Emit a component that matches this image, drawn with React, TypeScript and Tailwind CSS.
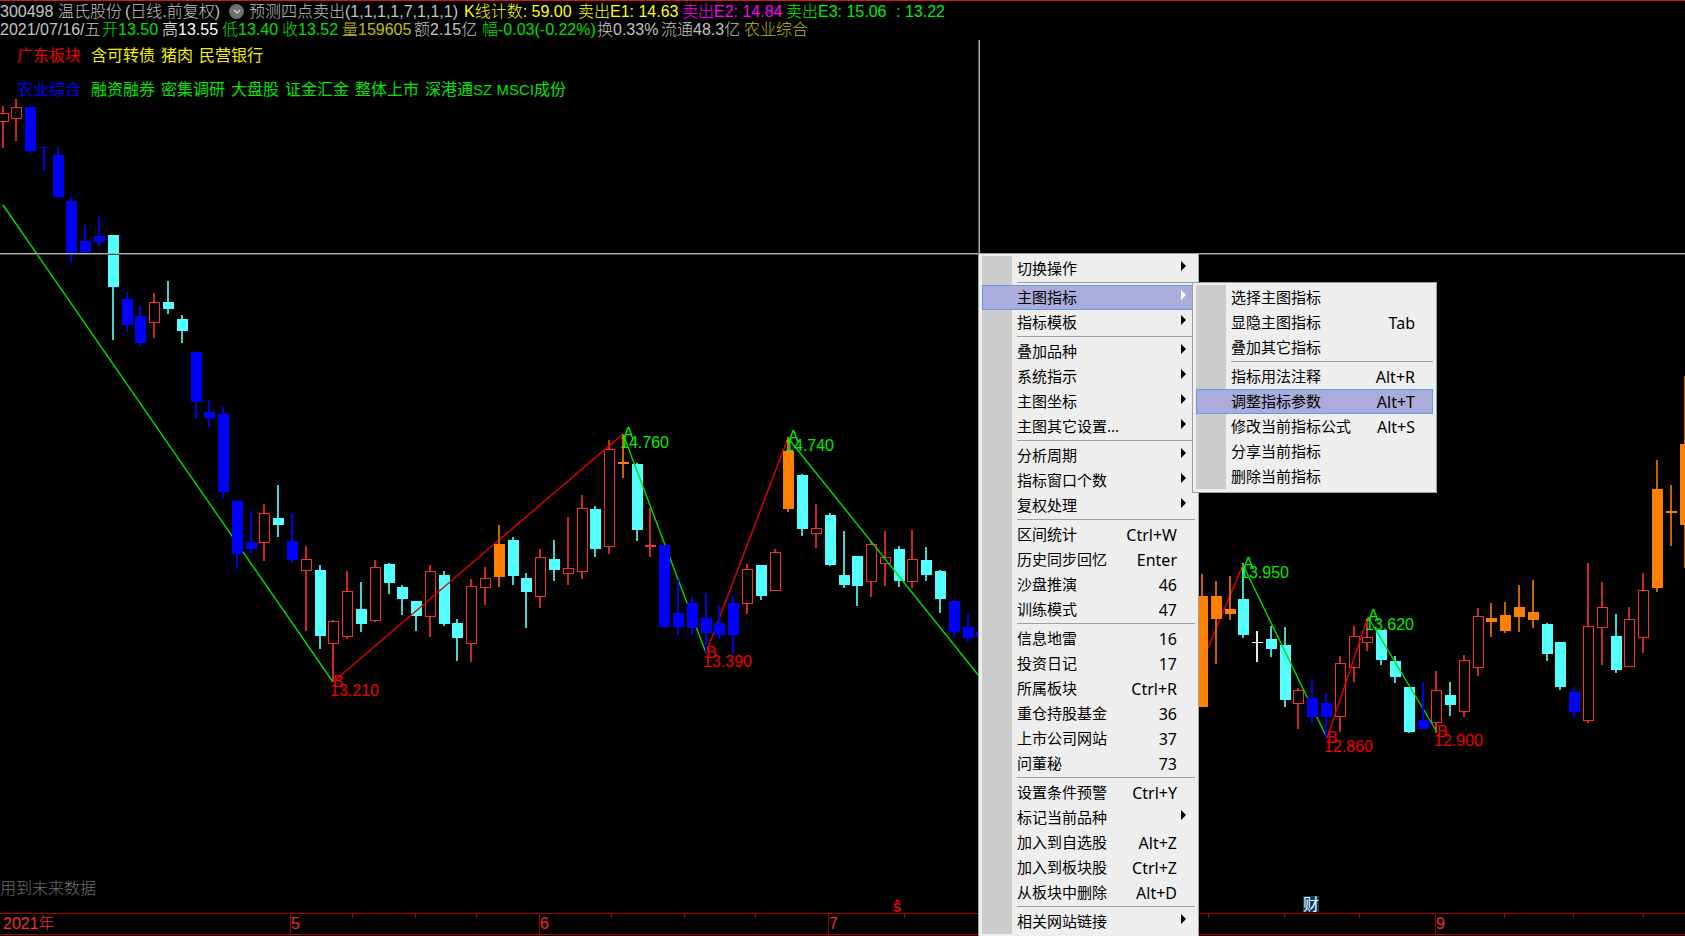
import React, { useState } from "react";
import { clsx } from "clsx";

type Kind = "up" | "down" | "blue" | "orange" | "flat";

// [slot, kind, high, body top, body bottom, low]
type Candle = [number, Kind, number, number, number, number];

const STEP = 13.787;
const slotX = (slot: number) => Math.round(2.5 + slot * STEP);

const candles: Candle[] = [
    [0, "up", 106, 113, 122, 148], [1, "up", 99, 107, 119, 141], [2, "blue", 107, 107, 151, 153],
    [3, "blue", 147, 147, 148, 171], [4, "blue", 147, 155, 197, 198], [5, "blue", 197, 201, 253, 263],
    [6, "blue", 225, 241, 252, 255], [7, "blue", 217, 236, 242, 247], [8, "down", 235, 235, 287, 340],
    [9, "blue", 292, 299, 325, 332], [10, "blue", 305, 316, 343, 346], [11, "up", 293, 302, 323, 338],
    [12, "down", 281, 302, 309, 314], [13, "down", 315, 319, 331, 343], [14, "blue", 352, 352, 402, 419],
    [15, "blue", 400, 412, 418, 427], [16, "blue", 407, 414, 492, 498], [17, "blue", 500, 501, 554, 569],
    [18, "blue", 511, 542, 549, 553], [19, "up", 504, 513, 543, 561], [20, "down", 485, 518, 525, 537],
    [21, "blue", 513, 541, 560, 563], [22, "up", 546, 559, 571, 631], [23, "down", 565, 570, 636, 649],
    [24, "up", 620, 621, 644, 682], [25, "up", 571, 591, 637, 639], [26, "down", 582, 609, 624, 632],
    [27, "up", 560, 567, 621, 622], [28, "down", 563, 564, 583, 594], [29, "down", 585, 587, 599, 615],
    [30, "down", 601, 601, 616, 631], [31, "up", 565, 571, 617, 637], [32, "down", 571, 575, 624, 626],
    [33, "down", 619, 623, 638, 661], [34, "up", 579, 586, 644, 662], [35, "up", 567, 578, 588, 605],
    [36, "orange", 525, 544, 577, 587], [37, "down", 537, 540, 576, 585], [38, "down", 573, 578, 592, 628],
    [39, "up", 549, 557, 597, 608], [40, "down", 540, 559, 570, 581], [41, "up", 517, 568, 574, 585],
    [42, "up", 495, 508, 572, 579], [43, "down", 506, 509, 549, 557], [44, "up", 440, 449, 547, 554],
    [45, "orange", 434, 462, 464, 478], [46, "down", 463, 464, 530, 541], [47, "up", 508, 545, 547, 557],
    [48, "blue", 545, 545, 627, 627], [49, "blue", 580, 613, 627, 635], [50, "blue", 596, 603, 628, 635],
    [51, "blue", 593, 618, 633, 652], [52, "blue", 605, 623, 635, 639], [53, "blue", 596, 603, 635, 653],
    [54, "up", 564, 569, 604, 614], [55, "down", 565, 565, 596, 600], [56, "up", 549, 552, 591, 591],
    [57, "orange", 437, 451, 509, 512], [58, "down", 474, 475, 529, 536], [59, "up", 504, 528, 534, 548],
    [60, "down", 513, 515, 565, 566], [61, "down", 531, 575, 585, 588], [62, "down", 556, 556, 586, 606],
    [63, "up", 541, 544, 582, 597], [64, "up", 531, 557, 564, 586], [65, "down", 546, 549, 581, 587],
    [66, "up", 530, 559, 582, 588], [67, "down", 547, 560, 575, 581], [68, "down", 570, 571, 599, 613],
    [69, "blue", 600, 601, 632, 637], [70, "blue", 614, 627, 638, 642], [71, "blue", 632, 632, 637, 637],
    [87, "orange", 574, 596, 707, 707], [88, "orange", 581, 596, 619, 664], [89, "orange", 576, 609, 614, 620],
    [90, "down", 563, 599, 635, 638], [91, "flat", 631, 642, 643, 662], [92, "down", 626, 639, 649, 657],
    [93, "down", 627, 645, 700, 707], [94, "up", 688, 690, 704, 729], [95, "blue", 679, 698, 717, 724],
    [96, "blue", 693, 703, 717, 738], [97, "up", 656, 663, 717, 732], [98, "up", 626, 636, 668, 682],
    [99, "up", 618, 637, 643, 651], [100, "down", 630, 630, 660, 665], [101, "down", 656, 661, 677, 683],
    [102, "down", 687, 687, 732, 733], [103, "blue", 682, 720, 729, 729], [104, "up", 671, 690, 723, 733],
    [105, "down", 682, 695, 705, 716], [106, "up", 655, 660, 712, 717], [107, "up", 608, 616, 668, 676],
    [108, "orange", 603, 618, 622, 637], [109, "orange", 602, 615, 631, 633], [110, "orange", 585, 607, 617, 632],
    [111, "orange", 580, 612, 620, 628], [112, "down", 623, 624, 654, 661], [113, "down", 642, 642, 687, 690],
    [114, "blue", 687, 692, 712, 717], [115, "up", 563, 626, 721, 723], [116, "up", 582, 607, 628, 665],
    [117, "down", 614, 636, 670, 673], [118, "up", 607, 619, 667, 667], [119, "up", 573, 590, 638, 653],
    [120, "orange", 460, 489, 588, 592], [121, "orange", 485, 511, 513, 546], [122, "orange", 376, 444, 525, 568],
];

const wickClass: Record<Kind, string> = {
    up: "fill-[#c82828]",
    down: "fill-[#46d0d0]",
    blue: "fill-[#0000e0]",
    orange: "fill-[#c86400]",
    flat: "fill-[#e8e8e8]",
};

const bodyClass: Record<Kind, string> = {
    up: "fill-black stroke-[#f43030]",
    down: "fill-[#54ffff]",
    blue: "fill-[#0000ff]",
    orange: "fill-[#ff8000]",
    flat: "fill-white",
};

const trends = [
    { points: "3,205 333,682", color: "stroke-[#00e000]" },
    { points: "333,682 623,434", color: "stroke-[#e60000]" },
    { points: "623,434 706,653", color: "stroke-[#00e000]" },
    { points: "706,653 788,438", color: "stroke-[#e60000]" },
    { points: "788,438 979,676", color: "stroke-[#00e000]" },
    { points: "1198,671 1243,565", color: "stroke-[#e60000]" },
    { points: "1243,565 1327,738", color: "stroke-[#00e000]" },
    { points: "1327,738 1368,617", color: "stroke-[#e60000]" },
    { points: "1368,617 1437,732", color: "stroke-[#00e000]" },
];

const pivots = [
    { x: 333, y: 682, mark: "B", price: "13.210" },
    { x: 623, y: 434, mark: "A", price: "14.760" },
    { x: 706, y: 653, mark: "B", price: "13.390" },
    { x: 788, y: 437, mark: "A", price: "14.740" },
    { x: 1243, y: 564, mark: "A", price: "13.950" },
    { x: 1327, y: 738, mark: "B", price: "12.860" },
    { x: 1368, y: 616, mark: "A", price: "13.620" },
    { x: 1437, y: 732, mark: "B", price: "12.900" },
];

const months = [
    { x: 290, label: "5" },
    { x: 539, label: "6" },
    { x: 828, label: "7" },
    { x: 1435, label: "9" },
];

const ticks = [352, 415, 476, 611, 684, 755, 904, 1208, 1284, 1359, 1504, 1573, 1643];

interface Entry {
    label: string;
    keys?: string;
    sub?: boolean;
}

const mainMenu: Entry[][] = [
    [{ label: "切换操作", sub: true }],
    [{ label: "主图指标", sub: true }, { label: "指标模板", sub: true }],
    [
        { label: "叠加品种", sub: true },
        { label: "系统指示", sub: true },
        { label: "主图坐标", sub: true },
        { label: "主图其它设置...", sub: true },
    ],
    [
        { label: "分析周期", sub: true },
        { label: "指标窗口个数", sub: true },
        { label: "复权处理", sub: true },
    ],
    [
        { label: "区间统计", keys: "Ctrl+W" },
        { label: "历史同步回忆", keys: "Enter" },
        { label: "沙盘推演", keys: "46" },
        { label: "训练模式", keys: "47" },
    ],
    [
        { label: "信息地雷", keys: "16" },
        { label: "投资日记", keys: "17" },
        { label: "所属板块", keys: "Ctrl+R" },
        { label: "重仓持股基金", keys: "36" },
        { label: "上市公司网站", keys: "37" },
        { label: "问董秘", keys: "73" },
    ],
    [
        { label: "设置条件预警", keys: "Ctrl+Y" },
        { label: "标记当前品种", sub: true },
        { label: "加入到自选股", keys: "Alt+Z" },
        { label: "加入到板块股", keys: "Ctrl+Z" },
        { label: "从板块中删除", keys: "Alt+D" },
    ],
    [{ label: "相关网站链接", sub: true }],
];

const indicatorMenu: Entry[][] = [
    [{ label: "选择主图指标" }, { label: "显隐主图指标", keys: "Tab" }, { label: "叠加其它指标" }],
    [
        { label: "指标用法注释", keys: "Alt+R" },
        { label: "调整指标参数", keys: "Alt+T" },
        { label: "修改当前指标公式", keys: "Alt+S" },
        { label: "分享当前指标" },
        { label: "删除当前指标" },
    ],
];

const CandleShape: React.FC<{ candle: Candle }> = ({ candle }) => {
    const [slot, kind, high, top, bottom, low] = candle;
    const x = slotX(slot);
    const thin = bottom - top < 3;
    return (
        <g>
            <rect x={x - 1} y={high} width={2} height={Math.max(low - high, 1)} className={wickClass[kind]} />
            {kind === "up" && !thin ? (
                <rect x={x - 4.5} y={top + 0.5} width={10} height={bottom - top - 1} className={bodyClass.up} />
            ) : (
                <rect
                    x={x - 5}
                    y={top}
                    width={11}
                    height={Math.max(bottom - top, 1)}
                    className={kind === "up" ? "fill-[#f43030]" : bodyClass[kind]}
                />
            )}
        </g>
    );
};

const Chart: React.FC = () => {
    const solid = (c: Candle) => c[1] === "blue" || c[1] === "orange";
    return (
        <svg className="block h-full w-full" aria-label="K线图">
            <g transform="translate(0 -40)">
                {candles.filter(c => !solid(c)).map(c => <CandleShape key={c[0]} candle={c} />)}
                {trends.map(t => (
                    <polyline key={t.points} points={t.points} className={clsx("fill-none", t.color)} strokeWidth={1.4} />
                ))}
                {candles.filter(solid).map(c => <CandleShape key={c[0]} candle={c} />)}

                {pivots.map(p => (
                    <g key={p.price} className={p.mark === "A" ? "fill-[#00f000]" : "fill-[#f00000]"} fontSize={16}>
                        <text x={p.x} y={p.y + 5}>{p.mark}</text>
                        <text x={p.x - 3} y={p.y + 14}>{p.price}</text>
                    </g>
                ))}

                {/* dividend marker */}
                <path d="M897.5 899 L901 902.5 L894 902.5 Z" className="fill-[#f00000]" />
                <text x={893} y={912} fontSize={12} className="fill-[#f00000] font-bold">S</text>
                <rect x={1303} y={896} width={16} height={16} className="fill-[#0c3a68]" />
                <text x={1303} y={910} fontSize={16} className="fill-white">财</text>

                {/* crosshair */}
                <rect x={0} y={253} width="100%" height={1} className="fill-[#b0b0b0]" />
                <rect x={0} y={254} width="100%" height={1} className="fill-[#505050]" />
                <rect x={978} y={40} width={1} height={213} className="fill-[#505050]" />
                <rect x={979} y={40} width={1} height={213} className="fill-[#b0b0b0]" />
            </g>
        </svg>
    );
};

const TimeAxis: React.FC = () => (
    <svg className="block h-full w-full" aria-label="时间轴">
        <rect x={0} y={0} width="100%" height={1} className="fill-[#a80000]" />
        <rect x={0} y={21} width="100%" height={1} className="fill-[#a80000]" />
        {ticks.map(x => <rect key={x} x={x} y={1} width={1} height={4} className="fill-[#a80000]" />)}
        <text x={3} y={16} fontSize={16} className="fill-[#f03030] font-light">2021年</text>
        {months.map(m => (
            <g key={m.label}>
                <rect x={m.x} y={1} width={1} height={20} className="fill-[#a80000]" />
                <text x={m.x + 1} y={16} fontSize={16} className="fill-[#f03030]">{m.label}</text>
            </g>
        ))}
    </svg>
);

interface MenuProps {
    name: string;
    groups: Entry[][];
    active: string;
    onPick: (label: string) => void;
}

const Menu: React.FC<MenuProps> = ({ name, groups, active, onPick }) => (
    <div role="menu" aria-label={name} className="border border-[#a0a0a0] bg-[#eeeeee] px-[3px] pt-[2px] pb-[3px] text-[15px] text-black">
        <div className="bg-linear-to-r from-[#cccccc] from-[30px] to-[#eeeeee] to-[30px]">
            {groups.map((group, i) => (
                <React.Fragment key={group[0].label}>
                    {i > 0 && <div role="separator" className="mb-[2px] ml-[35px] pt-px"><div className="h-px bg-[#a0a0a0]" /></div>}
                    {group.map(entry => {
                        const on = entry.label === active;
                        return (
                            <button
                                key={entry.label}
                                type="button"
                                role="menuitem"
                                onClick={() => onPick(entry.label)}
                                className={clsx(
                                    "flex h-[25px] w-full items-center border pr-2 pl-[34px] text-left whitespace-nowrap",
                                    on ? "border-[#5a9ee4] bg-[#acacdc]" : "border-transparent"
                                )}
                            >
                                <span className="flex-1">{entry.label}</span>
                                <span className="text-base">{entry.keys}</span>
                                <svg viewBox="0 0 5 16" className="ml-1 h-4 w-[5px]">
                                    {entry.sub && <path d="M0 0 L5 5 L0 10 Z" className={on ? "fill-white" : "fill-black"} />}
                                </svg>
                            </button>
                        );
                    })}
                </React.Fragment>
            ))}
        </div>
    </div>
);

const App: React.FC = () => {
    const [mainActive, setMainActive] = useState("主图指标");
    const [subActive, setSubActive] = useState("调整指标参数");

    return (
        <div className="relative flex h-screen flex-col overflow-hidden bg-black font-['Liberation_Sans','Noto_Sans_CJK_SC',sans-serif] text-base text-[#c4c4c4]">
            <header className="h-10 shrink-0 border-t border-[#d81818] pt-[2px] leading-[17px] font-light whitespace-nowrap">
                <div className="flex items-center">
                    <span className="w-[58px]">300498</span>
                    <span className="w-[67px]">温氏股份</span>
                    <span className="w-[104px]">(日线.前复权)</span>
                    <button type="button" aria-label="展开" className="mr-[5px] flex size-[15px] items-center justify-center rounded-full bg-[#707070]">
                        <svg viewBox="0 0 8 5" className="h-[5px] w-2 fill-none stroke-[#d0d0d0]" strokeWidth={1.5}>
                            <path d="M1 1 L4 4 L7 1" />
                        </svg>
                    </button>
                    <span className="w-[215px]">预测四点卖出(1,1,1,1,7,1,1,1)</span>
                    <span className="w-[114px] text-[#ffff00]">K线计数: 59.00</span>
                    <span className="w-[104px] text-[#ffff00]">卖出E1: 14.63</span>
                    <span className="w-[104px] text-[#ff00ff]">卖出E2: 14.84</span>
                    <span className="w-[110px] text-[#00f000]">卖出E3: 15.06</span>
                    <span className="text-[#00f000]">: 13.22</span>
                </div>
                <div className="mt-px flex">
                    <span className="w-[102px]">2021/07/16/五</span>
                    <span className="w-[60px] text-[#00e000]">开13.50</span>
                    <span className="w-[60px] text-white">高13.55</span>
                    <span className="w-[60px] text-[#00e000]">低13.40</span>
                    <span className="w-[60px] text-[#00e000]">收13.52</span>
                    <span className="w-[72px] text-[#c0c000]">量159605</span>
                    <span className="w-[68px]">额2.15亿</span>
                    <span className="w-[115px] text-[#00e000]">幅-0.03(-0.22%)</span>
                    <span className="w-[64px]">换0.33%</span>
                    <span className="w-[83px]">流通48.3亿</span>
                    <span className="text-[#c0c000]">农业综合</span>
                </div>
            </header>

            <main className="relative min-h-0 flex-1">
                <Chart />
                <div className="absolute top-1 left-[17px] whitespace-nowrap">
                    <div className="flex h-[34px] gap-[6px] text-[#f0f000]">
                        <span className="mr-1 text-[#e80000]">广东板块</span>
                        <span>含可转债</span>
                        <span>猪肉</span>
                        <span>民营银行</span>
                    </div>
                    <div className="flex h-[34px] gap-[6px] text-[#00e600]">
                        <span className="mr-1 text-[#0000f0]">农业综合</span>
                        <span>融资融券</span>
                        <span>密集调研</span>
                        <span>大盘股</span>
                        <span>证金汇金</span>
                        <span>整体上市</span>
                        <span>深港通<span className="text-[15px]">SZ MSCI</span>成份</span>
                    </div>
                </div>
                <p className="absolute bottom-3 left-0 font-light text-[#707070]">用到未来数据</p>
            </main>

            <footer className="h-[23px] shrink-0">
                <TimeAxis />
            </footer>

            <div className="absolute top-[253px] left-[978px] w-[221px] font-['Noto_Sans','Noto_Sans_CJK_SC',sans-serif]">
                <Menu name="图表菜单" groups={mainMenu} active={mainActive} onPick={setMainActive} />
            </div>
            <div className="absolute top-[282px] left-[1192px] w-[245px] font-['Noto_Sans','Noto_Sans_CJK_SC',sans-serif]">
                <Menu name="主图指标" groups={indicatorMenu} active={subActive} onPick={setSubActive} />
            </div>
        </div>
    );
};

export default App;
